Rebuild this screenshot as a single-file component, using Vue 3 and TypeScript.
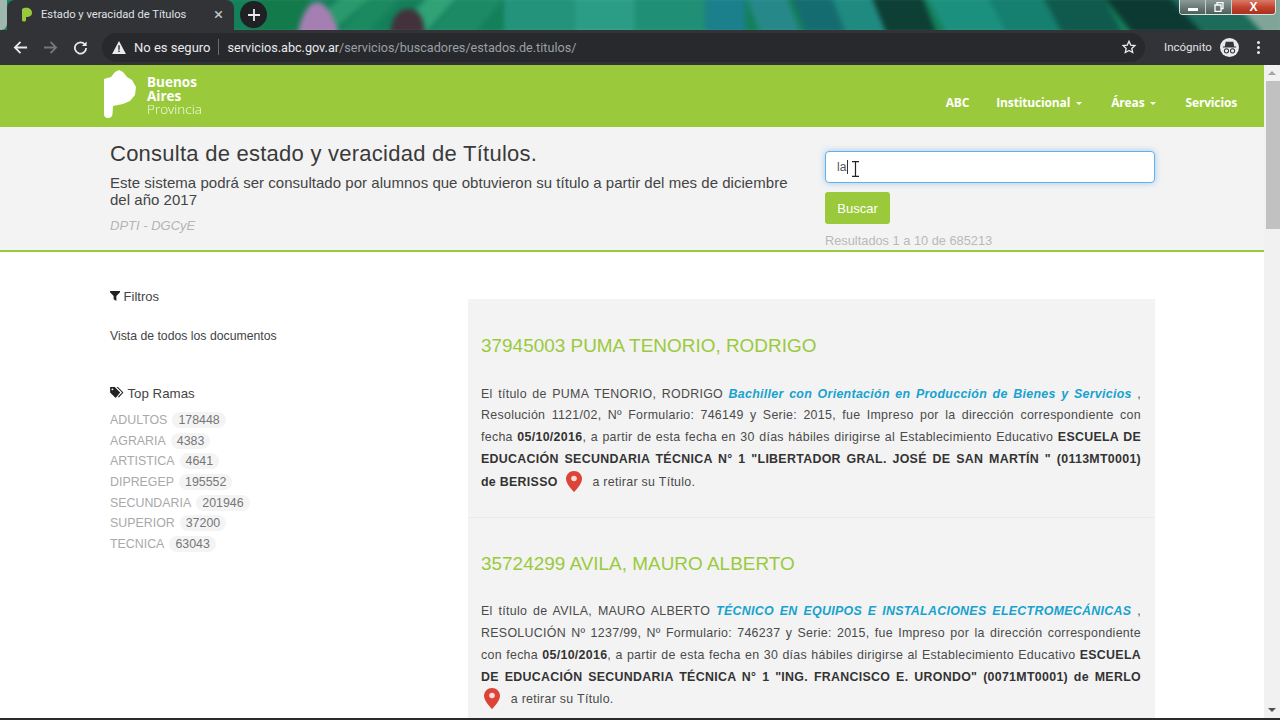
<script setup lang="ts">
interface Rama {
  name: string
  count: number
}

const ramas: Rama[] = [
  { name: 'ADULTOS', count: 178448 },
  { name: 'AGRARIA', count: 4383 },
  { name: 'ARTISTICA', count: 4641 },
  { name: 'DIPREGEP', count: 195552 },
  { name: 'SECUNDARIA', count: 201946 },
  { name: 'SUPERIOR', count: 37200 },
  { name: 'TECNICA', count: 63043 }
]

const navLinks = [
  { label: 'ABC', caret: false },
  { label: 'Institucional', caret: true },
  { label: 'Áreas', caret: true },
  { label: 'Servicios', caret: false }
]

const pinPath = 'M8 0C3.6 0 0 3.5 0 7.9 0 13 8 21 8 21s8-8 8-13.100C16 3.500 12.400 0 8 0z'

// slanted stripes of the window wallpaper: [x at top, x at bottom, width, colour]
const leaves: [number, number, number, string][] = [
  [262, 250, 50, '#137a4c'],
  [345, 300, 30, '#2a9a6c'],
  [375, 340, 28, '#1b8a60'],
  [430, 395, 30, '#2fa276'],
  [462, 430, 45, '#1d8a66'],
  [505, 505, 70, '#23937c'],
  [575, 575, 60, '#2b9d86'],
  [635, 635, 70, '#1f8f76'],
  [705, 705, 40, '#1c7f8c'],
  [745, 760, 40, '#27888a'],
  [790, 805, 40, '#156c70'],
  [830, 845, 40, '#1f8a80'],
  [870, 885, 50, '#0d3f35'],
  [925, 945, 60, '#1c907f'],
  [985, 1005, 55, '#157f70'],
  [1040, 1060, 60, '#0f5a4c'],
  [1100, 1130, 70, '#0c3a32'],
  [1165, 1200, 60, '#1c6b5b'],
  [1225, 1260, 60, '#7fa598']
]
</script>

<template>
  <div class="screen">
    <div class="tabstrip">
      <svg class="wallpaper" viewBox="0 0 1280 30" preserveAspectRatio="none">
        <rect width="1280" height="30" fill="#14805a" />
        <polygon
          v-for="(l, i) in leaves"
          :key="i"
          :points="`${l[0]},0 ${l[0] + l[2]},0 ${l[1] + l[2]},30 ${l[1]},30`"
          :fill="l[3]"
        />
        <path d="M300 30c2-12 10-25 19-25s18 13 22 25z" fill="#a57fb2" />
        <path d="M392 30c0-10 6-20 18-20s16 10 16 20z" fill="#43323b" />
      </svg>
      <div class="sliver"></div>
      <div class="tab">
        <svg class="favicon" viewBox="0 0 12 15"><path d="M1 2C4 0 11 0 11 6c0 4-5 4-6 4v3c0 2-4 2-4 0z" fill="#9aca3c" /></svg>
        <span class="tab-title">Estado y veracidad de Títulos</span>
        <span class="tab-close">×</span>
      </div>
      <div class="newtab">
        <svg viewBox="0 0 12 12" width="12" height="12"><path d="M6 0v12M0 6h12" stroke="#e8eaed" stroke-width="1.800" /></svg>
      </div>
      <div class="winctl">
        <span class="win-min"><i></i></span>
        <span class="win-max">
          <svg viewBox="0 0 10 10" width="10" height="10"><path d="M3 2.500V.5h6v6H7M1 3h6v6.500H1z" fill="none" stroke="#fff" stroke-width="1.300" /></svg>
        </span>
        <span class="win-close">X</span>
      </div>
    </div>

    <div class="toolbar">
      <svg class="tool" viewBox="0 0 16 16"><path d="M15 8H2.500M8 2 2 8l6 6" fill="none" stroke="#e8eaed" stroke-width="1.900" /></svg>
      <svg class="tool" viewBox="0 0 16 16"><path d="M1 8h12.500M8 2l6 6-6 6" fill="none" stroke="#75777a" stroke-width="1.900" /></svg>
      <svg class="tool" viewBox="0 0 16 16"><path d="M13 5.200A6 6 0 1 0 14 8.500" fill="none" stroke="#e8eaed" stroke-width="1.900" /><path d="M14.500 1.500v5h-5z" fill="#e8eaed" /></svg>
      <div class="omnibox">
        <svg class="warn" viewBox="0 0 16 15"><path d="M8 0l8 15H0z" fill="#e8eaed" /><path d="M7.200 5h1.600v5H7.200zM7.200 11h1.600v1.800H7.200z" fill="#2a2b2e" /></svg>
        <span class="insecure">No es seguro</span>
        <span class="sep"></span>
        <span class="url"><b>servicios.abc.gov.ar</b>/servicios/buscadores/estados.de.titulos/</span>
        <svg class="star" viewBox="0 0 24 24"><path d="M12 3.500l2.600 5.700 6.200.7-4.600 4.200 1.300 6.100L12 17.100l-5.500 3.100 1.300-6.100-4.600-4.200 6.200-.7z" fill="none" stroke="#e8eaed" stroke-width="2" /></svg>
      </div>
      <span class="incognito">Incógnito</span>
      <svg class="spy" viewBox="0 0 20 20">
        <circle cx="10" cy="10" r="10" fill="#e8eaed" />
        <path d="M3 9h14v1H3zM6 4h8l1 5H5z" fill="#35363a" />
        <circle cx="6.800" cy="13.500" r="2.200" fill="none" stroke="#35363a" stroke-width="1.100" />
        <circle cx="13.200" cy="13.500" r="2.200" fill="none" stroke="#35363a" stroke-width="1.100" />
      </svg>
      <div class="dots"><i></i><i></i><i></i></div>
    </div>

    <div class="viewport">
      <div class="page">
        <nav class="navbar">
          <div class="logo">
            <svg class="logo-mark" viewBox="0 0 34 48">
              <path d="M1 9 8 7 12 2 16 0 20 2 24 7 29 10 33 17 32 25 27 31 20 34 10 36 9.500 44Q9 48 5 48 1 48 1 44z" fill="#fff" />
            </svg>
            <div class="logo-text">
              <b>Buenos</b>
              <b>Aires</b>
              <span>Provincia</span>
            </div>
          </div>
          <ul class="navlinks">
            <li v-for="link in navLinks" :key="link.label">
              {{ link.label }}<i v-if="link.caret" class="caret"></i>
            </li>
          </ul>
        </nav>

        <header class="head">
          <div class="head-left">
            <h1>Consulta de estado y veracidad de Títulos.</h1>
            <p class="lead">Este sistema podrá ser consultado por alumnos que obtuvieron su título a partir del mes de diciembre del año 2017</p>
            <p class="dept">DPTI - DGCyE</p>
          </div>
          <div class="head-right">
            <div class="search">
              <span class="typed">la</span><i class="text-caret"></i>
              <svg class="ibeam" viewBox="0 0 9 16"><path d="M1 .7h7M1 15.300h7M4.500 1v14" fill="none" stroke="#222" stroke-width="1.200" /></svg>
            </div>
            <button class="buscar" type="button">Buscar</button>
            <p class="count">Resultados 1 a 10 de 685213</p>
          </div>
        </header>

        <div class="content">
          <aside class="side">
            <h4 class="filtros">
              <svg class="filter-ico" viewBox="0 0 11 11"><path d="M0 0h11v1.500L7 5.500V11L4 9V5.500L0 1.500z" fill="#222" /></svg>
              Filtros
            </h4>
            <p class="all-docs">Vista de todos los documentos</p>
            <h4 class="top">
              <svg class="tag-ico" viewBox="0 0 15 12"><path d="M0 0h5l6 6-5 6-6-6zM7 0h1.500l6 6-5 5.500-1-1L13 6z" fill="#222" /><circle cx="2.500" cy="2.500" r="1" fill="#fff" /></svg>
              Top Ramas
            </h4>
            <ul class="ramas">
              <li v-for="r in ramas" :key="r.name">
                <span class="rama-name">{{ r.name }}</span>
                <span class="badge">{{ r.count }}</span>
              </li>
            </ul>
          </aside>

          <main class="results">
            <article class="result">
              <h3>37945003 PUMA TENORIO, RODRIGO</h3>
              <div class="body">
                <span class="line">El título de PUMA TENORIO, RODRIGO <em>Bachiller con Orientación en Producción de Bienes y Servicios</em> ,</span>
                <span class="line">Resolución 1121/02, Nº Formulario: 746149 y Serie: 2015, fue Impreso por la dirección correspondiente con</span>
                <span class="line">fecha <b>05/10/2016</b>, a partir de esta fecha en 30 días hábiles dirigirse al Establecimiento Educativo <b>ESCUELA DE</b></span>
                <span class="line"><b>EDUCACIÓN SECUNDARIA TÉCNICA N° 1 "LIBERTADOR GRAL. JOSÉ DE SAN MARTÍN " (0113MT0001)</b></span>
                <span class="line last"><b>de BERISSO</b>
                  <svg class="pin after-text" viewBox="0 0 16 21"><path :d="pinPath" fill="#db4437" /><circle cx="8" cy="7.500" r="2.800" fill="#f7dcd9" /></svg>
                  a retirar su Título.</span>
              </div>
            </article>
            <article class="result">
              <h3>35724299 AVILA, MAURO ALBERTO</h3>
              <div class="body">
                <span class="line">El título de AVILA, MAURO ALBERTO <em>TÉCNICO EN EQUIPOS E INSTALACIONES ELECTROMECÁNICAS</em> ,</span>
                <span class="line">RESOLUCIÓN Nº 1237/99, Nº Formulario: 746237 y Serie: 2015, fue Impreso por la dirección correspondiente</span>
                <span class="line">con fecha <b>05/10/2016</b>, a partir de esta fecha en 30 días hábiles dirigirse al Establecimiento Educativo <b>ESCUELA</b></span>
                <span class="line"><b>DE EDUCACIÓN SECUNDARIA TÉCNICA N° 1 "ING. FRANCISCO E. URONDO" (0071MT0001) de MERLO</b></span>
                <span class="line last">
                  <svg class="pin" viewBox="0 0 16 21"><path :d="pinPath" fill="#db4437" /><circle cx="8" cy="7.500" r="2.800" fill="#f7dcd9" /></svg>
                  a retirar su Título.</span>
              </div>
            </article>
          </main>
        </div>
      </div>

      <div class="scrollbar">
        <span class="arrow up"></span>
        <div class="thumb"></div>
        <span class="arrow down"></span>
      </div>
    </div>
    <div class="bottom-line"></div>
  </div>
</template>

<style>
html, body {
  margin: 0;
  overflow: hidden;
}
</style>

<style scoped>
* {
  box-sizing: border-box;
}

.screen {
  width: 1280px;
  height: 720px;
  overflow: hidden;
  display: flex;
  flex-direction: column;
  background: #fff;
  font-family: "Liberation Sans", Arial, sans-serif;
  color: #333;
}

/* tab strip, the window wallpaper shows behind it */
.tabstrip {
  position: relative;
  height: 30px;
  flex: none;
  display: flex;
  align-items: stretch;
  overflow: hidden;
}

.wallpaper {
  position: absolute;
  left: -4px;
  top: -4px;
  width: 1288px;
  height: 38px;
  filter: blur(2.500px);
}

.sliver {
  position: relative;
  width: 7px;
  background: #9fb8ae;
  border-radius: 0 0 6px 0;
}

.tab {
  position: relative;
  width: 227px;
  display: flex;
  align-items: center;
  background: #323337;
  border-radius: 8px 8px 0 0;
  padding: 0 0 2px 14px;
  color: #dfe1e5;
  font: 11.200px "Roboto", "Liberation Sans", sans-serif;
}

.favicon {
  width: 12px;
  height: 15px;
  margin-right: 8px;
}

.tab-title {
  flex: 1;
}

.tab-close {
  margin-right: 11px;
  font-size: 17px;
  color: #c4c7c9;
  line-height: 1;
}

.newtab {
  position: relative;
  width: 27px;
  height: 27px;
  margin: 1px 0 0 6px;
  border-radius: 50%;
  background: #202124;
  display: flex;
  align-items: center;
  justify-content: center;
}

.winctl {
  position: relative;
  margin-left: auto;
  margin-right: 4px;
  width: 97px;
  height: 15px;
  display: flex;
  border: 1px solid #dde5e2;
  border-top: none;
  border-radius: 0 0 4px 4px;
  overflow: hidden;
}

.winctl span {
  display: flex;
  align-items: center;
  justify-content: center;
  color: #fff;
}

.win-min,
.win-max {
  width: 26px;
  background: linear-gradient(#8b9b98, #6b7c78 50%, #4e5f5c);
  border-right: 1px solid #c5cfcc;
}

.win-min i {
  width: 10px;
  height: 3px;
  margin-top: 4px;
  background: #fff;
}

.win-close {
  flex: 1;
  background: linear-gradient(#d97a68, #c2402c 55%, #a83220);
  font-size: 12px;
  font-weight: 700;
}

.toolbar {
  height: 35px;
  flex: none;
  background: #323337;
  display: flex;
  align-items: center;
  padding: 0 0 1px 13px;
  color: #e8eaed;
}

.tool {
  width: 15px;
  height: 15px;
  margin-right: 15px;
}

.omnibox {
  width: 1043px;
  height: 29px;
  margin-left: -1px;
  padding-left: 10px;
  display: flex;
  align-items: center;
  background: #28292c;
  border-radius: 15px;
  font: 13px "Roboto", "Liberation Sans", sans-serif;
}

.warn {
  width: 14px;
  height: 13px;
  margin-right: 8px;
}

.insecure {
  color: #e8eaed;
  white-space: nowrap;
}

.sep {
  width: 1px;
  height: 16px;
  margin: 0 9px 0 7px;
  background: #6b6d70;
}

.url {
  color: #9aa0a6;
  font-size: 12.640px;
}

.url b {
  font-weight: 400;
  color: #e8eaed;
}

.star {
  width: 16px;
  height: 16px;
  margin-left: auto;
  margin-right: 8px;
}

.incognito {
  margin-left: 19px;
  font: 11.500px "Roboto", "Liberation Sans", sans-serif;
  color: #e0e2e5;
}

.spy {
  width: 19px;
  height: 19px;
  margin-left: 8px;
}

.dots {
  margin-left: 18px;
  display: flex;
  flex-direction: column;
  gap: 2px;
}

.dots i {
  width: 3px;
  height: 3px;
  border-radius: 50%;
  background: #e8eaed;
}

.viewport {
  flex: 1;
  min-height: 0;
  display: flex;
  overflow: hidden;
}

.page {
  width: 1264px;
  flex: none;
  overflow: hidden;
}

.navbar {
  height: 62px;
  background: #9aca3c;
  display: flex;
  justify-content: space-between;
  padding: 5px 27px 0 103px;
}

.logo {
  display: flex;
  height: 48px;
}

.logo-mark {
  width: 34px;
  height: 48px;
}

.logo-text {
  margin: 6px 0 0 10px;
  display: flex;
  flex-direction: column;
  color: #fff;
  font: 13.500px/13.500px "Open Sans", "Liberation Sans", sans-serif;
}

.logo-text b {
  font-weight: 700;
}

.logo-text span {
  font-weight: 300;
  opacity: 0.9;
}

.navlinks {
  list-style: none;
  display: flex;
  gap: 29px;
  margin: 26px 0 0;
  padding: 0;
  color: #fff;
  font: 700 12px/14px "Open Sans", "Liberation Sans", sans-serif;
  letter-spacing: -0.150px;
}

.navlinks li:first-child {
  margin-right: -2px;
}

.caret {
  display: inline-block;
  margin-left: 6px;
  vertical-align: 2px;
  border-top: 3px solid #fff;
  border-left: 3px solid transparent;
  border-right: 3px solid transparent;
}

.head {
  height: 125px;
  background: #f3f3f3;
  border-bottom: 2px solid #9aca3c;
  display: flex;
  padding-left: 110px;
}

.head-left {
  width: 715px;
  padding-right: 30px;
}

.head h1 {
  margin: 15px 0 0;
  font-size: 22px;
  line-height: 24px;
  font-weight: 400;
  letter-spacing: 0.250px;
  color: #3a3a3a;
}

.lead {
  margin: 8px 0 0;
  font-size: 15px;
  line-height: 17px;
  letter-spacing: 0.030px;
  color: #444;
}

.dept {
  margin: 9px 0 0;
  font-size: 13px;
  line-height: 17px;
  font-style: italic;
  color: #b5b5b5;
}

.head-right {
  width: 330px;
  padding-top: 24px;
}

.search {
  height: 32px;
  background: #fff;
  border: 1px solid #66afe9;
  border-radius: 4px;
  box-shadow: 0 0 6px rgba(102, 175, 233, 0.6);
  display: flex;
  align-items: center;
  padding-left: 11px;
  font-size: 12px;
  color: #555;
}

.text-caret {
  width: 1px;
  height: 14px;
  background: #333;
  margin-left: 1px;
}

.ibeam {
  width: 9px;
  height: 16px;
  margin: 3px 0 0 3px;
}

.buscar {
  display: block;
  width: 65px;
  height: 32px;
  margin-top: 9px;
  border: none;
  border-radius: 3px;
  background: #9aca3c;
  color: #fff;
  font: 13px "Liberation Sans", Arial, sans-serif;
}

.count {
  margin: 10px 0 0;
  font-size: 12.800px;
  line-height: 14px;
  color: #b9b9b9;
}

.content {
  display: flex;
  padding-left: 110px;
}

.side {
  width: 358px;
  flex: none;
  padding-top: 37px;
  font-size: 12.250px;
  color: #444;
}

.side h4 {
  margin: 0;
  font-size: 13px;
  line-height: 16px;
  font-weight: 400;
  color: #444;
}

.filter-ico {
  width: 10px;
  height: 10px;
}

.tag-ico {
  width: 14px;
  height: 11px;
}

.all-docs {
  margin: 23px 0 0;
  line-height: 16px;
}

.side .top {
  margin-top: 42px;
  font-size: 13.300px;
}

.ramas {
  list-style: none;
  margin: 7.500px 0 0;
  padding: 0;
}

.ramas li {
  height: 20.700px;
  display: flex;
  align-items: center;
  font-size: 12.400px;
}

.rama-name {
  color: #a9a9a9;
}

.badge {
  margin-left: 5px;
  padding: 0 6px;
  height: 16px;
  line-height: 16px;
  border-radius: 8px;
  background: #f4f4f4;
  color: #777;
}

.results {
  width: 687px;
  flex: none;
  margin-top: 47px;
  background: #f3f3f3;
}

.result {
  padding: 1px 14px 24.500px 13px;
  border-bottom: 1px solid #ebebeb;
}

.result + .result {
  padding-top: 0;
  border-bottom: none;
}

.result h3 {
  margin: 34px 0 0;
  font-size: 18.950px;
  line-height: 24px;
  font-weight: 400;
  color: #9aca3c;
}

.body {
  margin-top: 25.500px;
  font-size: 12.400px;
  line-height: 21.750px;
  letter-spacing: 0.300px;
  color: #4a4a4a;
}

.line {
  display: block;
  height: 21.750px;
  white-space: normal;
  text-align: justify;
  text-align-last: justify;
}

.line.last {
  text-align-last: left;
}

.result b {
  color: #333;
}

.result em {
  font-weight: 700;
  color: #17a2cf;
}

.pin {
  width: 16px;
  height: 21px;
  margin: 0 7px 0 3px;
  vertical-align: -6px;
}

.pin.after-text {
  margin-left: 8px;
}

.scrollbar {
  width: 16px;
  flex: none;
  background: #f1f1f1;
  display: flex;
  flex-direction: column;
  align-items: center;
}

.arrow {
  width: 0;
  height: 0;
  margin: 6px 0;
  border-left: 4px solid transparent;
  border-right: 4px solid transparent;
}

.arrow.up {
  border-bottom: 4px solid #a3a3a3;
}

.arrow.down {
  margin-top: auto;
  border-top: 4px solid #505050;
}

.thumb {
  width: 14px;
  height: 148px;
  align-self: flex-end;
  background: #c1c1c1;
}

.bottom-line {
  height: 2px;
  flex: none;
  background: #2b2b2b;
}
</style>
